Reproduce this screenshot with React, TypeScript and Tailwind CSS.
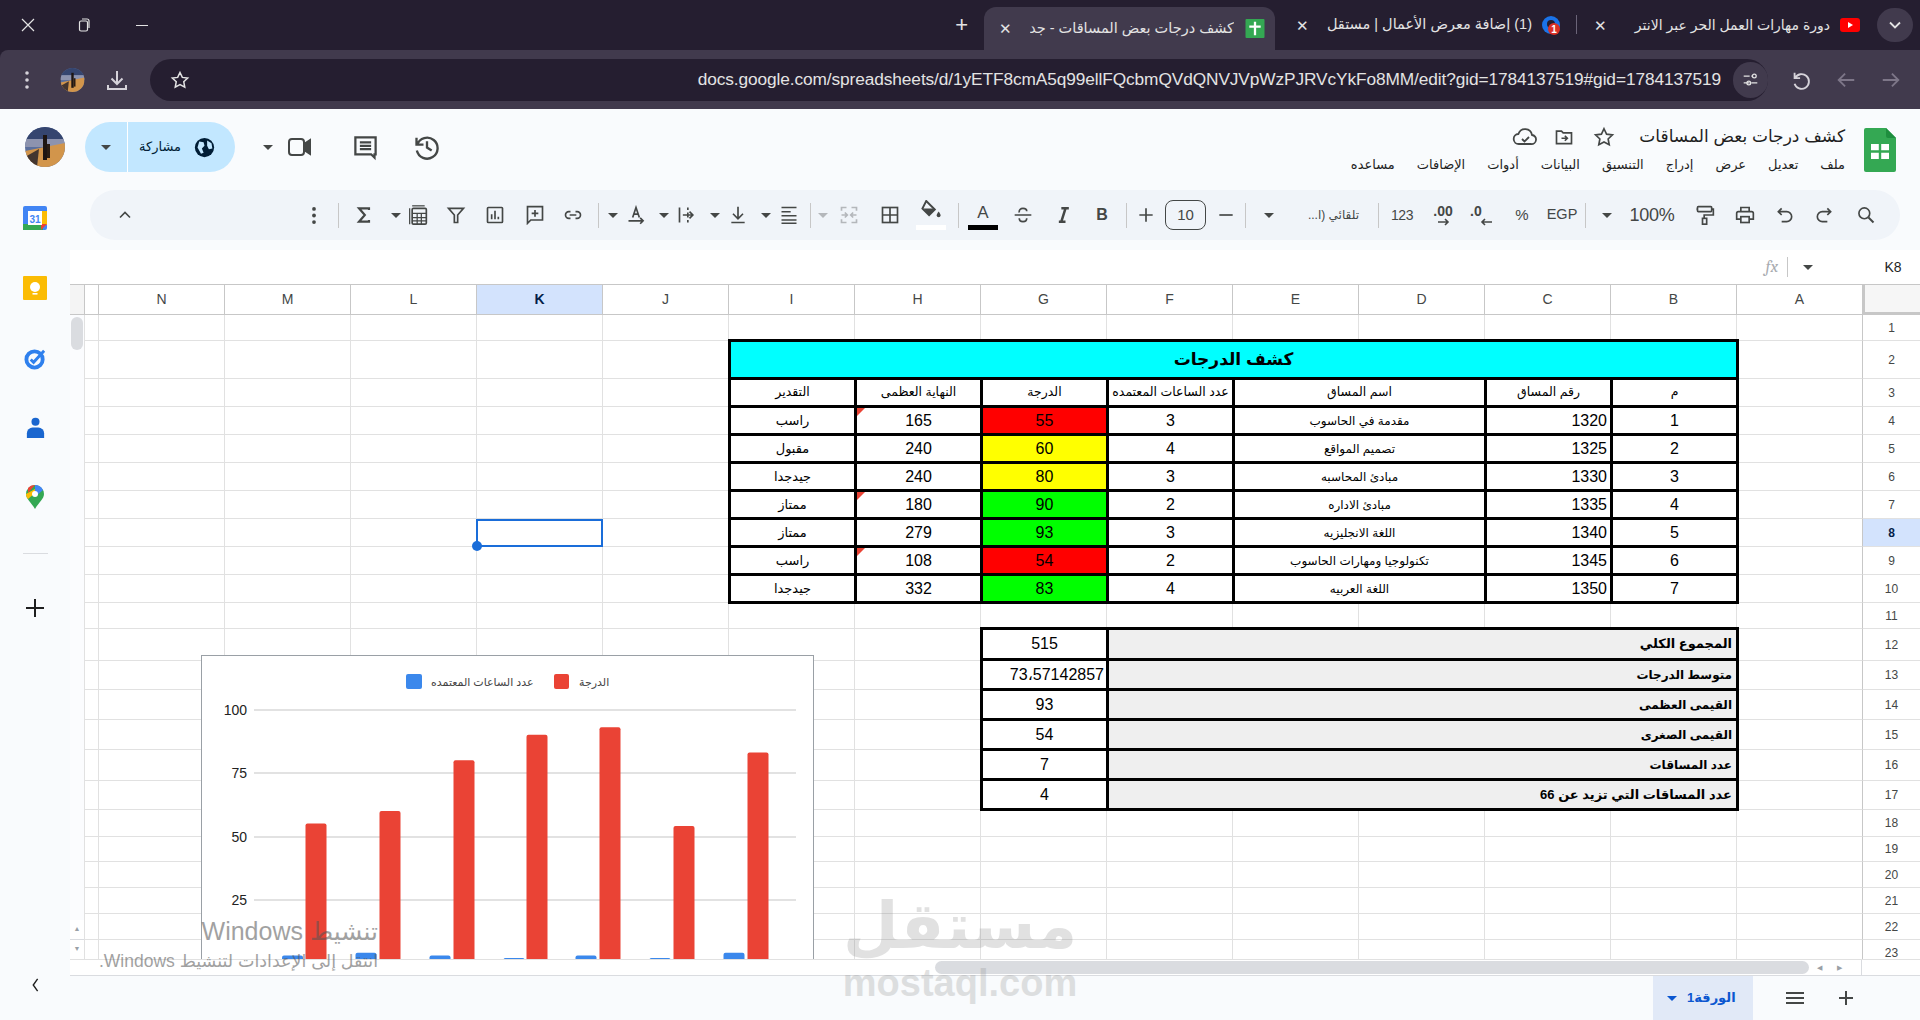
import type { ReactNode } from 'react';

const COLS = ['A', 'B', 'C', 'D', 'E', 'F', 'G', 'H', 'I', 'J', 'K', 'L', 'M', 'N'];
const ROW_COUNT = 23;

const COURSES = [
  { n: 1, code: 1320, name: 'مقدمة في الحاسوب', hours: 3, grade: 55, max: 165, note: 'راسب', bg: 'bg-[#ff0000]', flag: true },
  { n: 2, code: 1325, name: 'تصميم المواقع', hours: 4, grade: 60, max: 240, note: 'مقبول', bg: 'bg-[#ffff00]', flag: false },
  { n: 3, code: 1330, name: 'مبادئ المحاسبه', hours: 3, grade: 80, max: 240, note: 'جيدجدا', bg: 'bg-[#ffff00]', flag: false },
  { n: 4, code: 1335, name: 'مبادئ الاداره', hours: 2, grade: 90, max: 180, note: 'ممتاز', bg: 'bg-[#00ff00]', flag: true },
  { n: 5, code: 1340, name: 'اللغة الانجليزيه', hours: 3, grade: 93, max: 279, note: 'ممتاز', bg: 'bg-[#00ff00]', flag: false },
  { n: 6, code: 1345, name: 'تكنولوجيا ومهارات الحاسوب', hours: 2, grade: 54, max: 108, note: 'راسب', bg: 'bg-[#ff0000]', flag: true },
  { n: 7, code: 1350, name: 'اللغة العربيه', hours: 4, grade: 83, max: 332, note: 'جيدجدا', bg: 'bg-[#00ff00]', flag: false },
];

const SUMMARY = [
  { label: 'المجموع الكلي', value: '515', h: 'h-[28px]', big: true },
  { label: 'متوسط الدرجات', value: '73،57142857', h: 'h-[27px]', big: false },
  { label: 'القيمى العظمى', value: '93', h: 'h-[27px]', big: false },
  { label: 'القيمى الصغرى', value: '54', h: 'h-[27px]', big: false },
  { label: 'عدد المساقات', value: '7', h: 'h-[27px]', big: false },
  { label: 'عدد المساقات التي تزيد عن 66', value: '4', h: 'h-[27px]', big: true },
];

const MENU = ['ملف', 'تعديل', 'عرض', 'إدراج', 'التنسيق', 'البيانات', 'أدوات', 'الإضافات', 'مساعده'];

function Ico({ className = '', children }: { className?: string; children: ReactNode }) {
  return (
    <svg
      viewBox="0 0 24 24"
      fill="none"
      stroke="#444746"
      strokeWidth={2}
      className={`h-5 w-5 shrink-0 ${className}`}
    >
      {children}
    </svg>
  );
}

function Caret({ className = '', color = '#444746' }: { className?: string; color?: string }) {
  return (
    <svg viewBox="0 0 10 5" className={`h-[5px] w-[10px] shrink-0 ${className}`}>
      <polygon points="0,0 10,0 5,5" fill={color} />
    </svg>
  );
}

function Sep({ className = '' }: { className?: string }) {
  return <div className={`h-[25px] w-px shrink-0 bg-[#c7c7c7] ${className}`} />;
}

function Avatar({ className = '' }: { className?: string }) {
  return (
    <svg viewBox="0 0 40 40" className={`shrink-0 ${className}`}>
      <defs>
        <clipPath id="avatar-clip">
          <ellipse cx="20" cy="20" rx="20" ry="20" />
        </clipPath>
      </defs>
      <g clipPath="url(#avatar-clip)">
        <rect width="40" height="40" fill="#5b6f9c" />
        <rect y="0" width="40" height="12" fill="#35456f" />
        <rect y="12" width="40" height="8" fill="#8d93ae" />
        <polygon points="0,24 40,16 40,40 0,40" fill="#d2954b" />
        <polygon points="0,30 14,22 12,40 0,40" fill="#43352f" />
        <rect x="18" y="8" width="4" height="25" fill="#1d1512" />
        <rect x="22" y="17" width="3" height="14" fill="#2a1d14" />
      </g>
    </svg>
  );
}

function ChromeBar() {
  return (
    <>
      <div className="flex h-[50px] bg-[#251e30] text-[#e3e3e3]">
        <div className="flex items-center">
          <svg viewBox="0 0 14 14" fill="none" stroke="#e3e3e3" strokeWidth={1.2} className="ml-[21px] h-[14px] w-[14px]">
            <path d="M1 1l12 12M13 1L1 13" />
          </svg>
          <svg viewBox="0 0 14 14" fill="none" stroke="#e3e3e3" strokeWidth={1.2} className="ml-[42px] h-[14px] w-[14px]">
            <rect x="2.5" y="3" width="8" height="10" rx="1.5" />
            <path d="M5 1h5a2 2 0 0 1 2 2v7" />
          </svg>
          <div className="ml-[45px] h-px w-[12px] bg-[#e3e3e3]" />
        </div>
        <div className="flex-1" />
        <div className="mr-[16px] flex items-center text-[22px] font-light leading-none">+</div>
        {/* active tab */}
        <div className="flex h-[43px] w-[291px] shrink-0 items-center self-end rounded-t-xl bg-[#413a4d]">
          <span className="ml-[15px] w-[12px] text-center text-[15px] leading-none">✕</span>
          <div dir="rtl" className="ml-[19px] w-[204px] overflow-hidden whitespace-nowrap text-[14.5px]">
            كشف درجات بعض المساقات - جد
          </div>
          <svg viewBox="0 0 20 20" className="ml-[11px] h-[19px] w-[20px] shrink-0">
            <rect width="20" height="20" rx="1" fill="#34a853" />
            <path d="M10 3v14M4 8h12" stroke="#fff" strokeWidth={2.4} />
          </svg>
        </div>
        {/* other tabs */}
        <div className="flex w-[301px] shrink-0 items-center">
          <span className="ml-[21px] w-[12px] text-center text-[15px] leading-none">✕</span>
          <div dir="rtl" className="ml-[14px] w-[210px] overflow-hidden whitespace-nowrap text-[14.5px]">
            (1) إضافة معرض الأعمال | مستقل
          </div>
          <svg viewBox="0 0 20 20" className="ml-[9px] h-[20px] w-[20px] shrink-0">
            <circle cx="10" cy="10" r="9" fill="#1a73e8" />
            <circle cx="10" cy="9" r="4" fill="#251e30" />
            <circle cx="13" cy="14" r="6" fill="#d93025" />
            <text x="13" y="18" fontSize="10" fontWeight="700" fill="#fff" textAnchor="middle">1</text>
          </svg>
        </div>
        <div className="mt-[15px] h-[19px] w-px shrink-0 bg-[#6b6478]" />
        <div className="flex w-[300px] shrink-0 items-center">
          <span className="ml-[17px] w-[12px] text-center text-[15px] leading-none">✕</span>
          <div dir="rtl" className="ml-[15px] w-[209px] overflow-hidden whitespace-nowrap text-[14px]">
            دورة مهارات العمل الحر عبر الانتر
          </div>
          <svg viewBox="0 0 20 14" className="ml-[10px] h-[14px] w-[20px] shrink-0">
            <rect width="20" height="14" rx="3" fill="#ff0000" />
            <polygon points="8,4 8,10 13,7" fill="#fff" />
          </svg>
        </div>
        <div className="mr-[7px] mt-2 flex h-[34px] w-[36px] items-center justify-center rounded-full bg-[#413a4d]">
          <svg viewBox="0 0 12 8" fill="none" stroke="#e3e3e3" strokeWidth={1.8} className="h-2 w-3">
            <path d="M1 1.5l5 5 5-5" />
          </svg>
        </div>
      </div>
      <div className="flex h-[59px] items-center rounded-tl-lg bg-[#413a4d] text-[#e3e3e3]">
        <svg viewBox="0 0 4 18" className="ml-[25px] h-[18px] w-1 shrink-0" fill="#d6d3da">
          <circle cx="2" cy="2" r="1.8" />
          <circle cx="2" cy="9" r="1.8" />
          <circle cx="2" cy="16" r="1.8" />
        </svg>
        <Avatar className="ml-[31px] h-[24px] w-[25px]" />
        <svg viewBox="0 0 24 24" fill="none" stroke="#d6d3da" strokeWidth={2} className="ml-[20px] h-[24px] w-[24px] shrink-0">
          <path d="M12 3v13M6.5 10.5L12 16l5.5-5.5M3 17v4h18v-4" />
        </svg>
        <div className="ml-[21px] flex h-[42px] w-[1618px] shrink-0 items-center rounded-full bg-[#251e30]">
          <svg viewBox="0 0 24 24" fill="none" stroke="#e3e3e3" strokeWidth={1.8} className="ml-[20px] h-5 w-5 shrink-0">
            <path d="M12 3l2.8 5.9 6.4.8-4.7 4.4 1.2 6.4L12 17.4l-5.7 3.1 1.2-6.4-4.7-4.4 6.4-.8z" />
          </svg>
          <div className="flex-1 whitespace-nowrap text-right text-[17.3px] tracking-[-0.1px]">
            docs.google.com/spreadsheets/d/1yETF8cmA5q99ellFQcbmQVdQNVJVpWzPJRVcYkFo8MM/edit?gid=1784137519#gid=1784137519
          </div>
          <div className="ml-[12px] flex h-[36px] w-[35px] shrink-0 items-center justify-center rounded-full bg-[#413a4d]">
            <svg viewBox="0 0 20 20" fill="none" stroke="#e3e3e3" strokeWidth={1.5} className="h-[17px] w-[17px]">
              <path d="M2 6h7M2 14h7M11 6h1M11 14h7" />
              <circle cx="14.5" cy="6" r="2.2" />
              <circle cx="8" cy="14" r="2.2" />
            </svg>
          </div>
        </div>
        <svg viewBox="0 0 24 24" fill="none" stroke="#d6d3da" strokeWidth={2} className="ml-[22px] h-[22px] w-[22px] shrink-0">
          <path d="M5 4v6h6M5.5 10A8 8 0 1 1 5 16" />
        </svg>
        <svg viewBox="0 0 24 24" fill="none" stroke="#7d7688" strokeWidth={2} className="ml-[23px] h-[22px] w-[22px] shrink-0">
          <path d="M21 12H4M11 5l-7 7 7 7" />
        </svg>
        <svg viewBox="0 0 24 24" fill="none" stroke="#7d7688" strokeWidth={2} className="ml-[23px] h-[22px] w-[22px] shrink-0">
          <path d="M3 12h17M13 5l7 7-7 7" />
        </svg>
      </div>
    </>
  );
}

function DocHeader() {
  return (
    <div className="flex h-[81px] items-start justify-between bg-[#f9fbfd]">
      <div className="flex items-center pt-[13px]">
        <Avatar className="ml-[25px] h-[40px] w-[40px]" />
        <div className="ml-[20px] flex h-[50px] w-[150px] items-center rounded-full bg-[#c2e7ff]">
          <Caret className="ml-[16px]" />
          <div className="ml-[16px] h-full w-px bg-white" />
          <span dir="rtl" className="ml-[8px] w-[48px] text-center text-[13px] text-[#001d35]">مشاركة</span>
          <svg viewBox="0 0 24 24" className="ml-[10px] h-[21px] w-[21px] shrink-0">
            <circle cx="12" cy="12" r="11" fill="#001d35" />
            <path d="M6 5l5 1 1 4-3 3 2 5-3 1-4-7zM15 4l5 3 1 6-4 1-2-4z" fill="#c2e7ff" />
          </svg>
        </div>
        <Caret className="ml-[28px]" />
        <svg viewBox="0 0 26 24" fill="none" stroke="#444746" strokeWidth={2} className="ml-[14px] h-[24px] w-[26px] shrink-0">
          <rect x="2" y="4" width="15" height="16" rx="3" />
          <path d="M17 9l6-4v14l-6-4z" fill="#444746" />
        </svg>
        <svg viewBox="0 0 24 24" fill="none" stroke="#444746" strokeWidth={2} className="ml-[39px] h-[27px] w-[27px] shrink-0">
          <path d="M3 3h18v15h-1v3l-3-3H3z" />
          <path d="M7 7.5h10M7 10.5h10M7 13.5h10" />
        </svg>
        <svg viewBox="0 0 24 24" fill="none" stroke="#444746" strokeWidth={2} className="ml-[34px] h-[28px] w-[28px] shrink-0">
          <path d="M3 4v6h6M3.6 10a9 9 0 1 1-.3 5" />
          <path d="M12 7v5.5l4 2.5" />
        </svg>
      </div>
      <div className="flex items-start">
        <div className="flex w-[510px] flex-col items-end pt-[17px]">
          <div className="flex h-[22px] items-center">
            <svg viewBox="0 0 26 20" fill="none" stroke="#444746" strokeWidth={1.8} className="h-5 w-[26px]">
              <path d="M7 17a5 5 0 0 1-.6-10A7 7 0 0 1 20 8a4.5 4.5 0 0 1-1 9z" />
              <path d="M10 12l2.5 2.5L17 10" />
            </svg>
            <svg viewBox="0 0 24 24" fill="none" stroke="#444746" strokeWidth={2} className="ml-[16px] h-5 w-5">
              <path d="M3 5h6l2 2h10v13H3z" />
              <path d="M9 13.5h7M13 10.5l3 3-3 3" />
            </svg>
            <svg viewBox="0 0 24 24" fill="none" stroke="#444746" strokeWidth={1.8} className="ml-[19px] h-[22px] w-[22px]">
              <path d="M12 3l2.8 5.9 6.4.8-4.7 4.4 1.2 6.4L12 17.4l-5.7 3.1 1.2-6.4-4.7-4.4 6.4-.8z" />
            </svg>
            <span dir="rtl" className="ml-[24px] whitespace-nowrap text-[17px] leading-[22px] text-[#1f1f1f]">
              كشف درجات بعض المساقات
            </span>
          </div>
          <div dir="rtl" className="mt-[8px] flex gap-[22px] whitespace-nowrap text-[13px] leading-[18px] text-[#1f1f1f]">
            {MENU.map((m) => (
              <span key={m}>{m}</span>
            ))}
          </div>
        </div>
        <svg viewBox="0 0 32 44" className="ml-[19px] mr-[24px] mt-[19px] h-[44px] w-[32px]">
          <path d="M2 0h20l10 10v32a2 2 0 0 1-2 2H2a2 2 0 0 1-2-2V2a2 2 0 0 1 2-2z" fill="#34a853" />
          <path d="M22 0l10 10H24a2 2 0 0 1-2-2z" fill="#1e8e3e" />
          <path d="M7 16h18v15H7z" fill="#fff" />
          <path d="M16 16v15M7 23.5h18" stroke="#34a853" strokeWidth={2.4} />
        </svg>
      </div>
    </div>
  );
}

function Toolbar() {
  return (
    <div className="flex h-[60px] shrink-0 items-start bg-[#f9fbfd] pl-[20px]">
      <div className="flex h-[50px] w-[1810px] items-center rounded-full bg-[#f0f4f9] text-[#444746]">
        <Ico className="ml-[25px]"><path d="M6 15l6-6 6 6" /></Ico>
        <svg viewBox="0 0 4 18" fill="#444746" className="ml-[177px] h-[17px] w-1 shrink-0">
          <circle cx="2" cy="2" r="2" />
          <circle cx="2" cy="9" r="2" />
          <circle cx="2" cy="16" r="2" />
        </svg>
        <Sep className="ml-[22px]" />
        <Ico className="ml-[15px]">
          <path d="M18 6V4H6l7 8-7 8h12v-2" strokeWidth={2.6} />
        </Ico>
        <Caret className="ml-[17px]" />
        <Ico className="ml-[7px]">
          <path d="M5 1h15" strokeWidth={1.5} />
          <path d="M2 4v19" strokeWidth={1.5} />
          <rect x="5" y="4" width="17" height="19" rx="1.5" />
          <path d="M5 10h17M5 15h17M5 19h17M11 10v13M16 10v13" strokeWidth={1.5} />
        </Ico>
        <Ico className="ml-[18px]"><path d="M3 4h18l-7 8v9h-4v-9z" /></Ico>
        <Ico className="ml-[19px]">
          <rect x="3" y="3" width="18" height="18" rx="1" />
          <path d="M8 17v-6M12 17V7M16 17v-3" />
        </Ico>
        <Ico className="ml-[20px]">
          <path d="M3 2h18v16H7l-4 4z" />
          <path d="M12 6v8M8 10h8" />
        </Ico>
        <Ico className="ml-[18px]">
          <path d="M9 8H7a4 4 0 0 0 0 8h2M15 8h2a4 4 0 0 1 0 8h-2M8 12h8" />
        </Ico>
        <Sep className="ml-[15px]" />
        <Caret className="ml-[9px]" />
        <Ico className="ml-[8px]">
          <path d="M8 15l4-12 4 12M9.5 11h5M3 19h17M17 15.5l3.5 3.5-3.5 3.5" />
        </Ico>
        <Caret className="ml-[13px]" />
        <Ico className="ml-[8px]">
          <path d="M3 3v18M13 3v3M13 9v6M13 18v3M7 12h12M15 8l4 4-4 4" />
        </Ico>
        <Caret className="ml-[13px]" />
        <Ico className="ml-[8px]">
          <path d="M12 2v14M6 10.5l6 6 6-6M4 21h16" />
        </Ico>
        <Caret className="ml-[13px]" />
        <Ico className="ml-[8px]">
          <path d="M3 3h18M3 8h11M3 13h18M3 18h18M3 22h18" strokeWidth={1.8} />
        </Ico>
        <Sep className="ml-[11px]" />
        <Caret className="ml-[7px]" color="#b4b7bb" />
        <svg viewBox="0 0 24 24" fill="none" stroke="#b4b7bb" strokeWidth={2} className="ml-[11px] h-5 w-5 shrink-0">
          <path d="M3 7V3h6M21 7V3h-6M3 17v4h6M21 17v4h-6M3 12h7M7 9l3 3-3 3M21 12h-7M17 9l-3 3 3 3" />
        </svg>
        <Ico className="ml-[21px]">
          <rect x="3" y="3" width="18" height="18" />
          <path d="M12 3v18M3 12h18" />
        </Ico>
        <div className="ml-[16px] flex h-[30px] w-[30px] shrink-0 flex-col items-center">
          <svg viewBox="0 0 24 22" fill="#444746" className="h-[21px] w-[24px]">
            <path d="M7 1l9 9-6 6-7-7z" fill="none" stroke="#444746" strokeWidth={2} />
            <path d="M4 9h12l-6 7z" />
            <path d="M20 12c1.4 2 2 3 2 4a2 2 0 0 1-4 0c0-1 .6-2 2-4z" />
          </svg>
          <div className="mt-1 h-[5px] w-full bg-white" />
        </div>
        <Sep className="ml-[12px]" />
        <div className="ml-[9px] flex h-[30px] w-[30px] shrink-0 flex-col items-center justify-end">
          <span className="text-[17px] leading-[20px]">A</span>
          <div className="mt-[2px] h-[5px] w-full bg-black" />
        </div>
        <Ico className="ml-[15px]">
          <path d="M2 12h20M7.5 9C7 6 9 4 12 4s4.5 1.5 4.5 3.5M7.5 16c0 2.5 2 4 4.5 4s4.5-1.5 4.5-4" />
        </Ico>
        <Ico className="ml-[20px]">
          <path d="M7 20h8M10 4h9M15 4l-5 16" strokeWidth={3} />
        </Ico>
        <div className="ml-[19px] w-5 shrink-0 text-center text-[16px] font-bold">B</div>
        <Sep className="ml-[14px]" />
        <Ico className="ml-[9px]"><path d="M12 4v16M4 12h16" /></Ico>
        <div className="ml-[9px] flex h-[30px] w-[41px] shrink-0 items-center justify-center rounded-lg border border-[#444746] text-[15px]">10</div>
        <Ico className="ml-[10px]"><path d="M4 12h16" /></Ico>
        <Sep className="ml-[9px]" />
        <Caret className="ml-[18px]" />
        <div dir="rtl" className="ml-[25px] w-[60px] shrink-0 whitespace-nowrap text-[12px]">تلقائي (ا...</div>
        <Sep className="ml-[19px]" />
        <div className="ml-[9px] w-[28px] shrink-0 text-center text-[14px] tracking-[-0.5px]">123</div>
        <div className="ml-[15px] flex w-[24px] shrink-0 flex-col items-center leading-none">
          <span className="text-[14px] font-bold leading-[14px]">.00</span>
          <svg viewBox="0 0 14 8" fill="none" stroke="#444746" strokeWidth={1.6} className="h-2 w-[14px]">
            <path d="M2 4h10M9 1l3 3-3 3" />
          </svg>
        </div>
        <div className="ml-[15px] flex w-[24px] shrink-0 flex-col leading-none">
          <span className="text-[14px] font-bold leading-[14px]">.0</span>
          <svg viewBox="0 0 14 8" fill="none" stroke="#444746" strokeWidth={1.6} className="ml-[10px] h-2 w-[14px]">
            <path d="M2 4h10M5 1L2 4l3 3" />
          </svg>
        </div>
        <div className="ml-[20px] w-4 shrink-0 text-center text-[15px]">%</div>
        <div className="ml-[16px] w-[32px] shrink-0 text-center text-[14.5px]">EGP</div>
        <Sep className="ml-[7px]" />
        <Caret className="ml-[16px]" />
        <div className="ml-[15px] w-[50px] shrink-0 text-center text-[18px] tracking-[-0.3px]">100%</div>
        <Ico className="ml-[18px]">
          <rect x="3" y="2" width="17" height="6" rx="1" />
          <path d="M3 5H2M20 5h2v7H11v4" />
          <rect x="9" y="16" width="5" height="7" />
        </Ico>
        <Ico className="ml-[20px]">
          <path d="M7 8V3h10v5M7 17H2V10a2 2 0 0 1 2-2h16a2 2 0 0 1 2 2v7h-5" />
          <rect x="7" y="14" width="10" height="7" />
        </Ico>
        <Ico className="ml-[20px]">
          <path d="M8 4L4 8l4 4M4 8h10a5 5 0 0 1 0 12H8" />
        </Ico>
        <Ico className="ml-[19px]">
          <path d="M16 4l4 4-4 4M20 8H10a5 5 0 0 0 0 12h6" />
        </Ico>
        <Ico className="ml-[22px]">
          <circle cx="10" cy="10" r="6.5" />
          <path d="M15 15l6 6" strokeWidth={2.4} />
        </Ico>
      </div>
    </div>
  );
}

function FormulaBar() {
  return (
    <div className="flex h-[35px] shrink-0 items-center justify-end border-b border-[#c7c7c7] bg-white pr-[17px]">
      <span className="font-serif text-[17px] italic text-[#a8abb0]">fx</span>
      <div className="ml-[9px] h-[20px] w-px bg-[#c7c7c7]" />
      <Caret className="ml-[15px]" />
      <span className="ml-[70px] w-[20px] text-center text-[14px] text-[#1f1f1f]">K8</span>
    </div>
  );
}

function GradesTable() {
  return (
    <div className="relative z-10 col-start-3 col-end-11 row-start-3 row-end-12 -mb-px -mr-[3px] -mt-[2px] grid grid-cols-[repeat(8,123px)] grid-rows-[35px_25px_repeat(7,25px)] gap-[3px] bg-black p-[3px] text-black">
      <div className="col-span-8 flex items-center justify-center bg-[#00ffff] text-[17px] font-bold">كشف الدرجات</div>
      {['م', 'رقم المساق', 'اسم المساق', 'عدد الساعات المعتمده', 'الدرجة', 'النهاية العظمى', 'التقدير'].map((h, i) => (
        <div
          key={h}
          className={`flex items-center justify-center whitespace-nowrap bg-white text-[12.5px] tracking-[-0.3px] ${i === 2 ? 'col-span-2' : ''}`}
        >
          {h}
        </div>
      ))}
      {COURSES.map((c) => (
        <div key={c.n} className="contents">
          <div className="flex items-center justify-center bg-white text-[16px]">{c.n}</div>
          <div className="flex items-center justify-start bg-white pr-[3px] text-[16px]">{c.code}</div>
          <div className="col-span-2 flex items-center justify-center whitespace-nowrap bg-white text-[12px] tracking-[-0.2px]">{c.name}</div>
          <div className="flex items-center justify-center bg-white text-[16px]">{c.hours}</div>
          <div className={`flex items-center justify-center text-[16px] ${c.bg}`}>{c.grade}</div>
          <div className="relative flex items-center justify-center bg-white text-[16px]">
            {c.max}
            {c.flag && (
              <div className="absolute left-0 top-0 border-r-[8px] border-t-[8px] border-r-transparent border-t-[#ea4335]" />
            )}
          </div>
          <div className="flex items-center justify-center bg-white text-[13px]">{c.note}</div>
        </div>
      ))}
    </div>
  );
}

function SummaryTable() {
  return (
    <div className="relative z-10 col-start-3 col-end-9 row-start-13 row-end-19 -mb-px -mr-[3px] -mt-[2px] grid grid-cols-[627px_123px] content-start gap-[3px] bg-black p-[3px] text-black">
      {SUMMARY.map((s) => (
        <div key={s.label} className="contents">
          <div className={`flex items-center whitespace-nowrap bg-[#efefef] pr-[4px] font-bold ${s.big ? 'text-[13px]' : 'text-[12px]'} ${s.h}`}>
            {s.label}
          </div>
          <div
            dir="ltr"
            className={`flex items-center bg-white text-[16px] ${s.value.length > 6 ? 'justify-end pr-[2px]' : 'justify-center'} ${s.h}`}
          >
            {s.value}
          </div>
        </div>
      ))}
    </div>
  );
}

function Chart() {
  const red = [55, 60, 80, 90, 93, 54, 83];
  const blue = [3, 4, 3, 2, 3, 2, 4];
  const redX = [315, 389, 463, 536, 609, 683, 757];
  const blueX = [291.5, 365, 439, 513, 585, 659, 733];
  // svg origin on the page: 201, 656; y axis zero at svg y 307
  return (
    <div dir="ltr" className="absolute left-[117px] top-[370px] z-20 h-[304px] w-[613px] border-x border-t border-[#9aa0a6] bg-white">
      <svg viewBox="0 0 613 304" className="h-[304px] w-[613px]">
        <rect x="204" y="18" width="16" height="15" rx="2" fill="#3b88ec" />
        <text x="229" y="30" fontSize="11" fill="#444">عدد الساعات المعتمده</text>
        <rect x="352" y="18" width="15" height="15" rx="2" fill="#ea4335" />
        <text x="377" y="30" fontSize="11" fill="#444">الدرجة</text>
        {[
          { y: 54, t: '100' },
          { y: 117, t: '75' },
          { y: 181, t: '50' },
          { y: 244, t: '25' },
        ].map((g) => (
          <g key={g.t}>
            <line x1="52" x2="594" y1={g.y} y2={g.y} stroke="#e2e2e2" strokeWidth={2} />
            <text x="45" y={g.y + 5} fontSize="14" fill="#222" textAnchor="end">{g.t}</text>
          </g>
        ))}
        {red.map((v, i) => (
          <g key={i}>
            <rect x={blueX[i] - 201 - 10.5} y={307 - blue[i] * 2.535} width="21" height={blue[i] * 2.535 + 4} rx="2" fill="#3b88ec" />
            <rect x={redX[i] - 201 - 10.5} y={307 - v * 2.535} width="21" height={v * 2.535} rx="2" fill="#ea4335" />
          </g>
        ))}
      </svg>
    </div>
  );
}

function Sheet() {
  const rows = Array.from({ length: ROW_COUNT }, (_, i) => i + 1);
  return (
    <div className="flex h-[674px] shrink-0 overflow-hidden bg-white">
      <div className="flex w-[14px] shrink-0 flex-col bg-[#fbfcfe]">
        <div className="h-[30px] border-b border-[#c7c7c7] bg-[#f4f4f4]" />
        <div className="mx-[1px] mt-[2px] h-[33px] rounded-full bg-[#dadce0]" />
        <div className="flex-1" />
        <div className="flex h-[20px] items-center justify-center border-b border-[#dadce0] bg-white text-[7px] text-[#9aa0a6]">▲</div>
        <div className="flex h-[19px] items-center justify-center bg-white text-[7px] text-[#9aa0a6]">▼</div>
      </div>
      <div
        dir="rtl"
        className="relative grid w-[1836px] grid-cols-[58px_repeat(14,126px)_14px] grid-rows-[30px_26px_38px_28px_28px_28px_28px_28px_28px_28px_28px_26px_32px_29px_30px_30px_31px_29px_27px_25px_26px_26px_26px_26px] text-[14px] text-[#444746]"
      >
        {/* corner and column letters */}
        <div className="border-b-[3px] border-l-[3px] border-[#c7c7c7] bg-[#f6f6f6]" />
        {COLS.map((c) => (
          <div
            key={c}
            className={`flex items-center justify-center border-b border-l border-[#c7c7c7] ${c === 'K' ? 'bg-[#d3e3fd] font-bold text-[#041e49]' : 'bg-white'}`}
          >
            {c}
          </div>
        ))}
        <div className="border-b border-l border-[#c7c7c7]" />

        <GradesTable />
        <SummaryTable />

        {rows.map((r) => (
          <div key={r} className="contents">
            <div
              className={`flex items-center justify-center border-b border-l border-b-[#e1e1e1] border-l-[#c7c7c7] text-[12px] ${r === 8 ? 'bg-[#d3e3fd] font-bold text-[#041e49]' : 'bg-white'}`}
            >
              {r}
            </div>
            {[...COLS, 'O'].map((c, ci) => {
              // cells under the two bordered tables are not rendered
              const inGrades = r >= 2 && r <= 10 && ci >= 1 && ci <= 8;
              const inSummary = r >= 12 && r <= 17 && ci >= 1 && ci <= 6;
              if (inGrades || inSummary) return null;
              if (c === 'K' && r === 8) {
                return (
                  <div key={c} className="relative z-10 -mr-px border-2 border-[#1a6dd9]">
                    <div className="absolute -bottom-[6px] -left-[6px] h-[10px] w-[10px] rounded-full bg-[#1a6dd9]" />
                  </div>
                );
              }
              return <div key={c} className="border-b border-l border-[#e1e1e1]" />;
            })}
          </div>
        ))}

        <Chart />
      </div>
    </div>
  );
}

function HScroll() {
  return (
    <div className="flex h-[16px] shrink-0 items-center border-t border-[#e1e1e1] bg-white">
      <div className="ml-[865px] h-[13px] w-[874px] rounded-full bg-[#dadce0]" />
      <span className="ml-[8px] w-[6px] text-[7px] leading-none text-[#9aa0a6]">◀</span>
      <span className="ml-[14px] w-[6px] text-[7px] leading-none text-[#9aa0a6]">▶</span>
      <div className="ml-[18px] h-full w-px bg-[#dadce0]" />
    </div>
  );
}

function SheetTabs() {
  return (
    <div className="flex h-[45px] shrink-0 items-stretch justify-end border-t border-[#dadce0] bg-[#f9fbfd] pr-[66px]">
      <div className="flex w-[100px] items-center bg-[#e1e9f7]">
        <Caret className="ml-[14px]" color="#0b57d0" />
        <span dir="rtl" className="ml-[10px] whitespace-nowrap text-[13px] font-bold text-[#0b57d0]">الورقة1</span>
      </div>
      <svg viewBox="0 0 20 14" fill="none" stroke="#444746" strokeWidth={2} className="ml-[32px] h-full w-5">
        <path d="M1 2h18M1 7h18M1 12h18" />
      </svg>
      <svg viewBox="0 0 16 16" fill="none" stroke="#444746" strokeWidth={2} className="ml-[33px] h-full w-[16px]">
        <path d="M8 1v14M1 8h14" />
      </svg>
    </div>
  );
}

function SideBar() {
  return (
    <div className="flex w-[70px] shrink-0 flex-col items-center bg-[#f9fbfd] pt-[16px]">
      <svg viewBox="0 0 24 24" className="h-[24px] w-[24px]">
        <rect width="24" height="24" rx="2" fill="#4285f4" />
        <rect x="18" y="5" width="6" height="14" fill="#fbbc04" />
        <rect y="18" width="20" height="6" fill="#34a853" />
        <polygon points="18,24 24,18 18,18" fill="#ea4335" />
        <rect x="5" y="5" width="14" height="14" fill="#fff" />
        <text x="12" y="16.5" fontSize="10" fontWeight="700" fill="#4285f4" textAnchor="middle">31</text>
      </svg>
      <svg viewBox="0 0 24 24" className="mt-[46px] h-[24px] w-[24px]">
        <rect width="24" height="24" rx="1" fill="#fbbc04" />
        <circle cx="12" cy="11" r="5" fill="#fff" />
        <rect x="9.5" y="17" width="5" height="1.6" fill="#fff" />
      </svg>
      <svg viewBox="0 0 24 24" fill="none" className="mt-[47px] h-[23px] w-[23px]">
        <circle cx="11" cy="13" r="8.5" stroke="#2f80ed" strokeWidth={4} />
        <path d="M7 13l3 3 11-12" stroke="#2f80ed" strokeWidth={3} />
      </svg>
      <svg viewBox="0 0 24 24" className="mt-[47px] h-[23px] w-[23px]">
        <circle cx="12" cy="5" r="4.2" fill="#1a66cf" />
        <path d="M3 22v-5a6 6 0 0 1 6-6h6a6 6 0 0 1 6 6v5z" fill="#1a66cf" />
      </svg>
      <svg viewBox="0 0 18 24" className="mt-[45px] h-[24px] w-[18px]">
        <path d="M9 0a9 9 0 0 1 9 9c0 5-5 8-9 15C5 17 0 14 0 9a9 9 0 0 1 9-9z" fill="#34a853" />
        <path d="M2 3a9 9 0 0 1 7-3l-7 8z" fill="#ea4335" />
        <path d="M9 0a9 9 0 0 1 8 5L9 12z" fill="#4285f4" />
        <path d="M0 9c0 2 1 4 2 5l7-6V4z" fill="#fbbc04" />
        <circle cx="9" cy="9" r="3" fill="#fff" />
      </svg>
      <div className="mt-[44px] h-px w-[25px] bg-[#dadce0]" />
      <svg viewBox="0 0 18 18" fill="none" stroke="#1f1f1f" strokeWidth={2} className="mt-[45px] h-[18px] w-[18px]">
        <path d="M9 0v18M0 9h18" />
      </svg>
      <svg viewBox="0 0 8 16" fill="none" stroke="#1f1f1f" strokeWidth={1.6} className="mt-[361px] h-[14px] w-2">
        <path d="M7 1L2 8l5 7" />
      </svg>
    </div>
  );
}

export default function App() {
  return (
    <div className="relative h-[1020px] w-[1920px] overflow-hidden bg-[#251e30] [font-family:'Liberation_Sans','DejaVu_Sans',sans-serif]">
      <ChromeBar />
      <DocHeader />
      <div className="flex h-[830px]">
        <SideBar />
        <div className="flex min-w-0 flex-1 flex-col">
          <Toolbar />
          <FormulaBar />
          <Sheet />
          <HScroll />
          <SheetTabs />
        </div>
      </div>

      {/* watermarks on top of the page */}
      <div className="pointer-events-none absolute left-[845px] top-[888px] z-30 flex w-[230px] flex-col items-center text-[#8a8a8a] opacity-25">
        <span dir="rtl" className="whitespace-nowrap text-[64px] font-bold leading-[76px]">مستقل</span>
        <span className="whitespace-nowrap text-[38px] font-bold leading-[38px]">mostaql.com</span>
      </div>
      <div className="pointer-events-none absolute left-0 top-[916px] z-30 w-[378px] text-right text-[#555] opacity-55">
        <div dir="rtl" className="text-[25px] leading-[30px]">تنشيط Windows</div>
        <div dir="rtl" className="mt-[5px] whitespace-nowrap text-[17.5px] leading-[20px]">انتقل إلى الإعدادات لتنشيط Windows.</div>
      </div>
    </div>
  );
}
